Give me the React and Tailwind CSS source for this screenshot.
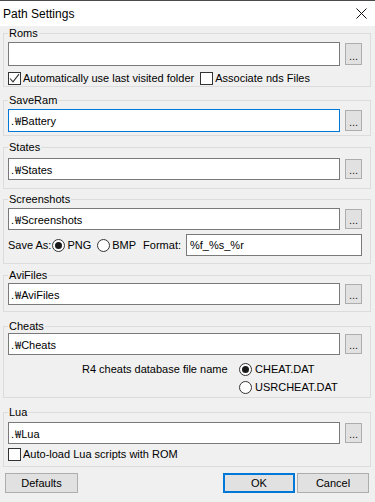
import React from "react";

const Check = ({ checked }) => (
  <span className="w-[13px] h-[13px] border border-[#333333] bg-white flex items-center justify-center shrink-0">
    {checked && (
      <svg width="11" height="11" viewBox="0 0 11 11">
        <path d="M1 5.5 L4 8.8 L10 1.2" fill="none" stroke="#333333" strokeWidth="1.1" />
      </svg>
    )}
  </span>
);

const Radio = ({ checked }) => (
  <span className="w-[13px] h-[13px] rounded-full border border-[#333333] bg-white flex items-center justify-center shrink-0">
    {checked && <span className="w-[7px] h-[7px] rounded-full bg-[#1a1a1a]" />}
  </span>
);

const Browse = ({ h }) => (
  <div
    className={`w-[17px] ${h} border border-[#adadad] bg-[#e1e1e1] flex items-end justify-center shrink-0 text-[11px] leading-[12px] pb-[2px] text-[#222]`}
  >
    ...
  </div>
);

const PathText = ({ name }) =>
  name ? (
    <span>
      .<span className="ml-[1px] font-['Noto_Sans_CJK_KR',sans-serif] text-[11px]">₩</span>
      {name}
    </span>
  ) : null;

const PathRow = ({ name, focused, inputH = "h-[23px]", btnH = "h-[21px]" }) => (
  <div className="flex items-center gap-[5px]">
    <div
      className={`flex-1 ${inputH} bg-white border ${
        focused ? "border-[#0078d7]" : "border-[#7a7a7a]"
      } flex items-center px-[2px] leading-[14px]`}
    >
      <PathText name={name} />
    </div>
    <Browse h={btnH} />
  </div>
);

const Group = ({ label, cls, children }) => (
  <fieldset className={`ml-[3px] mr-[4px] border border-[#dcdcdc] px-[4px] pr-[8px] min-w-0 ${cls}`}>
    <legend className="px-[1px] leading-[14px] text-[11px]">{label}</legend>
    {children}
  </fieldset>
);

export default function App() {
  return (
    <div className="w-[375px] h-[502px] bg-[#f0f0f0] flex flex-col overflow-hidden text-[11px] text-black font-['Liberation_Sans',Arial,sans-serif]">
      {/* Title bar */}
      <div className="h-[26px] bg-white border-t border-[#4a4a4a] flex items-center justify-between pl-[3px] pr-[8px] shrink-0">
        <span className="text-[12px] leading-[16px]">Path Settings</span>
        <svg width="11" height="11" viewBox="0 0 11 11">
          <path d="M0.5 0.5 L10.5 10.5 M10.5 0.5 L0.5 10.5" stroke="#111" strokeWidth="1" fill="none" />
        </svg>
      </div>

      {/* Roms */}
      <Group label="Roms" cls="pt-[2px] pb-[1px]">
        <PathRow name="" inputH="h-[24px]" btnH="h-[22px]" />
        <div className="mt-[5px] h-[14px] flex items-center">
          <Check checked />
          <span className="ml-[2px]">Automatically use last visited folder</span>
          <span className="ml-[6px]">
            <Check />
          </span>
          <span className="ml-[2px]">Associate nds Files</span>
        </div>
      </Group>

      {/* SaveRam */}
      <Group label="SaveRam" cls="mt-[6px] pt-[2px] pb-[3px]">
        <PathRow name="Battery" focused />
      </Group>

      {/* States */}
      <Group label="States" cls="mt-[4px] pt-[4px] pb-[8px]">
        <PathRow name="States" inputH="h-[22px]" btnH="h-[20px]" />
      </Group>

      {/* Screenshots */}
      <Group label="Screenshots" cls="mt-[3px] pt-[2px] pb-[7px]">
        <PathRow name="Screenshots" inputH="h-[22px]" btnH="h-[20px]" />
        <div className="mt-[4px] flex items-center h-[22px]">
          <span>Save As:</span>
          <span className="ml-[1px]">
            <Radio checked />
          </span>
          <span className="ml-[2px]">PNG</span>
          <span className="ml-[6px]">
            <Radio />
          </span>
          <span className="ml-[2px]">BMP</span>
          <span className="ml-[7px]">Format:</span>
          <div className="ml-[5px] flex-1 h-[22px] bg-white border border-[#7a7a7a] flex items-center px-[3px]">
            %f_%s_%r
          </div>
        </div>
      </Group>

      {/* AviFiles */}
      <Group label="AviFiles" cls="mt-[4px] pt-[1px] pb-[6px]">
        <PathRow name="AviFiles" inputH="h-[22px]" btnH="h-[20px]" />
      </Group>

      {/* Cheats */}
      <Group label="Cheats" cls="mt-[7px] pt-[0px] pb-[3px]">
        <PathRow name="Cheats" inputH="h-[22px]" btnH="h-[20px]" />
        <div className="mt-[7px] h-[14px] flex items-center pl-[74px]">
          <span className="w-[157px]">R4 cheats database file name</span>
          <Radio checked />
          <span className="ml-[3px]">CHEAT.DAT</span>
        </div>
        <div className="mt-[4px] h-[14px] flex items-center pl-[231px]">
          <Radio />
          <span className="ml-[3px]">USRCHEAT.DAT</span>
        </div>
      </Group>

      {/* Lua */}
      <Group label="Lua" cls="mt-[7px] pt-[3px] pb-[5px]">
        <PathRow name="Lua" inputH="h-[22px]" btnH="h-[20px]" />
        <div className="mt-[3px] h-[14px] flex items-center">
          <Check />
          <span className="ml-[2px]">Auto-load Lua scripts with ROM</span>
        </div>
      </Group>

      {/* Buttons */}
      <div className="mt-[6px] flex items-center pl-[5px] pr-[6px]">
        <div className="w-[73px] h-[20px] bg-[#e1e1e1] border border-[#adadad] flex items-center justify-center">
          Defaults
        </div>
        <div className="flex-1" />
        <div className="w-[72px] h-[20px] bg-[#e1e1e1] border-2 border-[#0078d7] flex items-center justify-center">
          OK
        </div>
        <div className="ml-[2px] w-[72px] h-[20px] bg-[#e1e1e1] border border-[#adadad] flex items-center justify-center">
          Cancel
        </div>
      </div>
    </div>
  );
}
